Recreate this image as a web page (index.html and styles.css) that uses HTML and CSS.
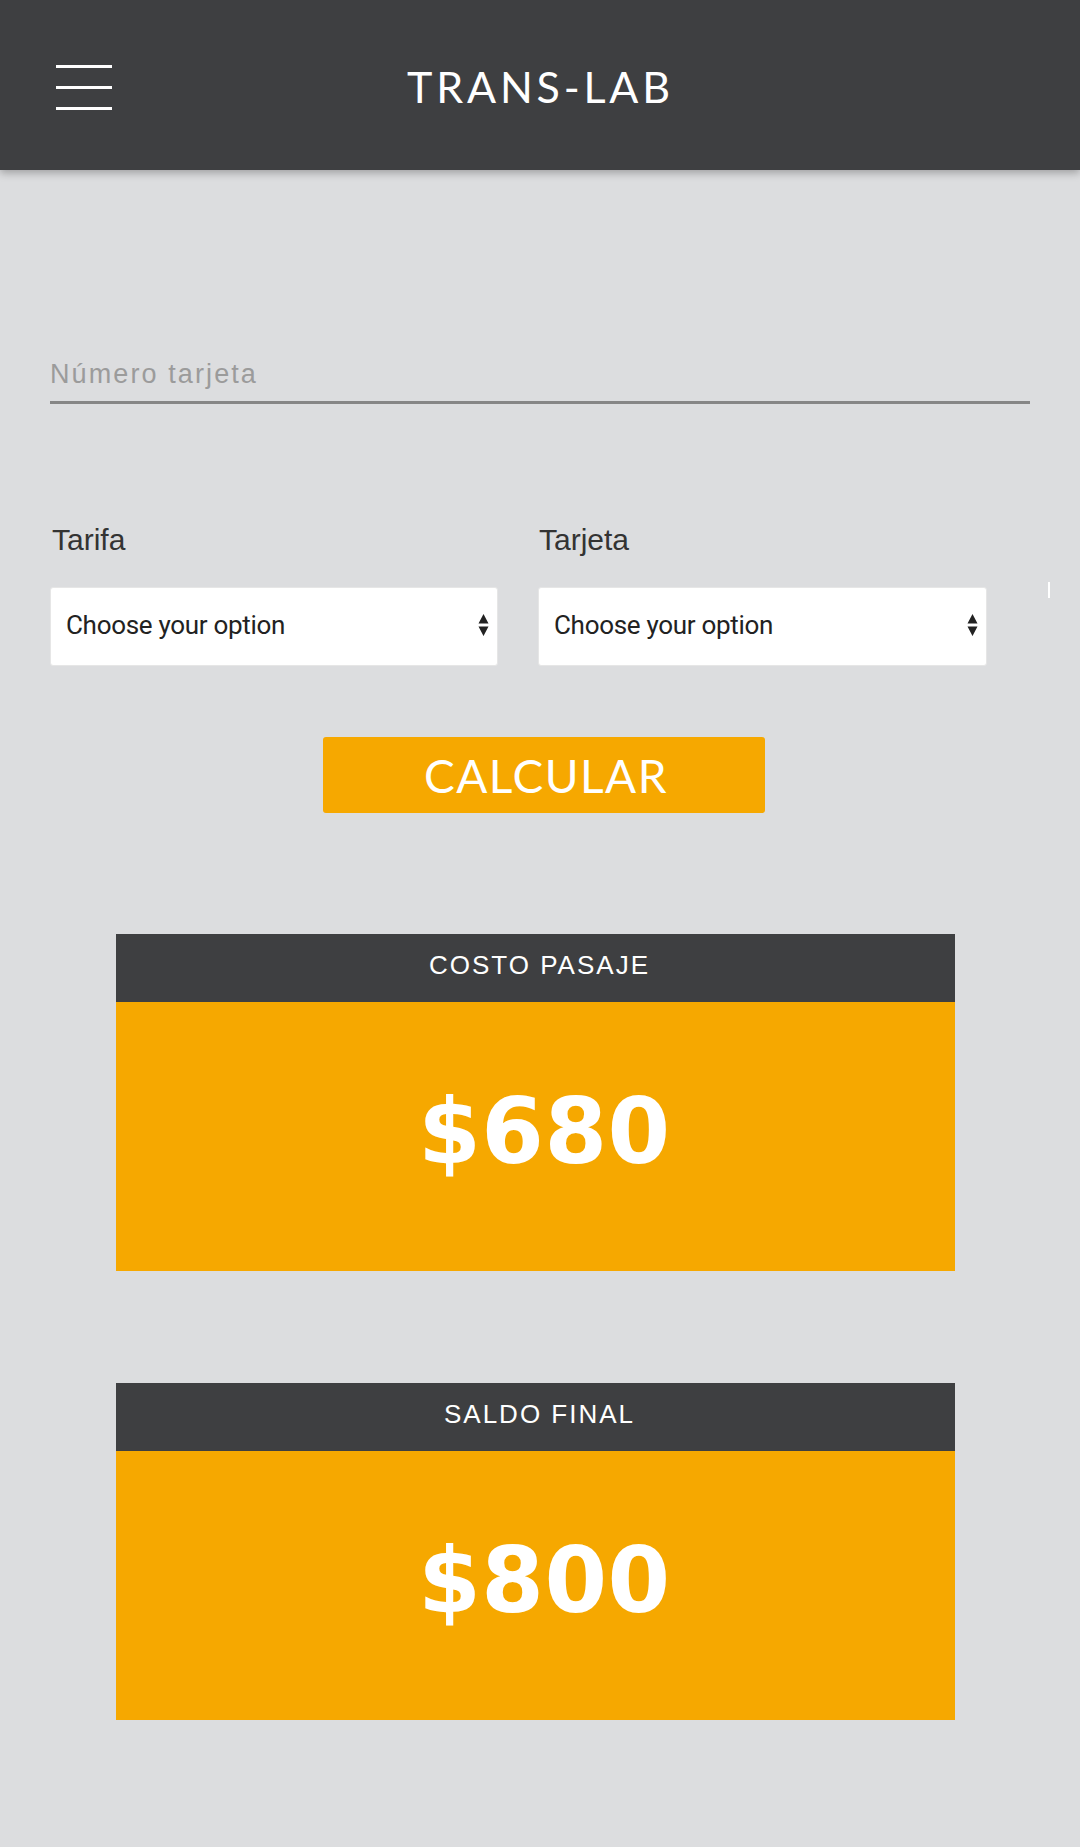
FILE: index.html
```html
<!DOCTYPE html>
<html lang="es">
<head>
<meta charset="utf-8">
<title>TRANS-LAB</title>
<link rel="stylesheet" href="styles.css">
</head>
<body>
<header class="topbar">
  <div class="menu-cell">
    <button class="hamburger" aria-label="menu">
      <span class="bar"></span><span class="bar"></span><span class="bar"></span>
    </button>
  </div>
  <h1 class="brand">TRANS-LAB</h1>
  <div class="spacer"></div>
</header>

<main class="content">
  <div class="field">
    <input class="card-input" type="text" placeholder="Número tarjeta">
  </div>

  <div class="select-row">
    <div class="col col-left">
      <label class="sel-label">Tarifa</label>
      <div class="select-wrap">
        <select class="sel"><option>Choose your option</option></select>
        <svg class="arrows" width="11" height="24" viewBox="0 0 11 24"><path d="M5.5 1 L10.5 10.5 L0.5 10.5 Z M0.5 13.5 L10.5 13.5 L5.5 23 Z" fill="#222"/></svg>
      </div>
    </div>
    <div class="col col-right">
      <label class="sel-label label-right">Tarjeta</label>
      <div class="select-wrap">
        <select class="sel"><option>Choose your option</option></select>
        <svg class="arrows" width="11" height="24" viewBox="0 0 11 24"><path d="M5.5 1 L10.5 10.5 L0.5 10.5 Z M0.5 13.5 L10.5 13.5 L5.5 23 Z" fill="#222"/></svg>
      </div>
    </div>
    <span class="tick"></span>
  </div>

  <button class="calc-btn">CALCULAR</button>

  <section class="result first">
    <div class="result-head">COSTO PASAJE</div>
    <div class="result-body">$680</div>
  </section>

  <section class="result second">
    <div class="result-head">SALDO FINAL</div>
    <div class="result-body">$800</div>
  </section>
</main>
</body>
</html>
```

FILE: styles.css
```css
html, body {
  margin: 0;
  padding: 0;
}
body {
  background: #dcdddf;
  min-height: 100vh;
  font-family: "Liberation Sans", Arial, sans-serif;
  overflow-x: hidden;
}

.topbar {
  height: 170px;
  background: #3e3f41;
  box-shadow: 0 3px 8px rgba(0,0,0,0.28);
  display: grid;
  grid-template-columns: 1fr auto 1fr;
  align-items: center;
  position: relative;
  z-index: 2;
}
.menu-cell {
  padding-left: 56px;
  padding-top: 5px;
}
.hamburger {
  background: none;
  border: 0;
  padding: 0;
  width: 56px;
  display: flex;
  flex-direction: column;
  gap: 18px;
  cursor: pointer;
}
.bar {
  display: block;
  height: 3px;
  width: 56px;
  background: #ffffff;
}
.brand {
  margin: 0;
  padding-top: 2px;
  font-family: Lato, "Open Sans", sans-serif;
  font-weight: 400;
  font-size: 43px;
  letter-spacing: 3.8px;
  color: #ffffff;
  padding-left: 1px;
}

.content {
  padding: 0 50px 127px;
}

.field {
  padding-top: 178px;
}
.card-input {
  display: block;
  width: 100%;
  box-sizing: content-box;
  height: 53px;
  padding: 0;
  border: 0;
  border-bottom: 3px solid #868686;
  background: transparent;
  font-family: "Liberation Sans", Arial, sans-serif;
  font-size: 27px;
  letter-spacing: 2.1px;
  color: #333;
  outline: none;
}
.card-input::placeholder {
  color: #9b9b9b;
}

.select-row {
  display: flex;
  margin-top: 119px;
}
.col {
  display: flex;
  flex-direction: column;
  gap: 30px;
  flex-shrink: 0;
}
.col-left { width: 448px; }
.col-right { width: 449px; margin-left: 40px; }
.sel-label {
  font-family: "Liberation Sans", Arial, sans-serif;
  font-size: 30px;
  line-height: 34px;
  color: #333333;
  padding-left: 2px;
}
.label-right { padding-left: 1px; }
.select-wrap {
  position: relative;
  height: 79px;
}
.sel {
  appearance: none;
  -webkit-appearance: none;
  display: block;
  width: 100%;
  height: 79px;
  box-sizing: border-box;
  border: 1px solid #e6e6e6;
  border-radius: 3px;
  background: #ffffff;
  padding: 0 0 4px 15px;
  font-family: Roboto, "Liberation Sans", sans-serif;
  font-size: 26px;
  letter-spacing: -0.3px;
  color: #222222;
}
.arrows {
  position: absolute;
  right: 9px;
  top: 26px;
  pointer-events: none;
}
.tick {
  display: block;
  flex-shrink: 0;
  width: 2px;
  height: 16px;
  background: #ffffff;
  margin-left: 61px;
  margin-top: 59px;
  align-self: flex-start;
}

.calc-btn {
  display: block;
  margin: 71px 0 0 273px;
  width: 442px;
  height: 76px;
  border: 0;
  border-radius: 3px;
  background: #f6a800;
  color: #ffffff;
  font-family: Lato, "Open Sans", sans-serif;
  font-weight: 400;
  font-size: 46px;
  letter-spacing: 1.5px;
  padding: 0 0 0 4px;
  cursor: pointer;
}

.result {
  width: 839px;
  margin-left: 66px;
}
.result.first { margin-top: 121px; }
.result.second { margin-top: 112px; }
.result-head {
  background: #3e3f41;
  color: #ffffff;
  text-align: center;
  font-family: "Liberation Sans", Arial, sans-serif;
  font-size: 26px;
  line-height: 30px;
  letter-spacing: 2px;
  padding: 16px 0 22px 8px;
}
.result-body {
  background: #f6a800;
  color: #ffffff;
  text-align: center;
  font-family: "DejaVu Sans", sans-serif;
  font-weight: 700;
  font-size: 90px;
  line-height: 90px;
  letter-spacing: 0.5px;
  padding: 85px 0 94px 18px;
}
```
